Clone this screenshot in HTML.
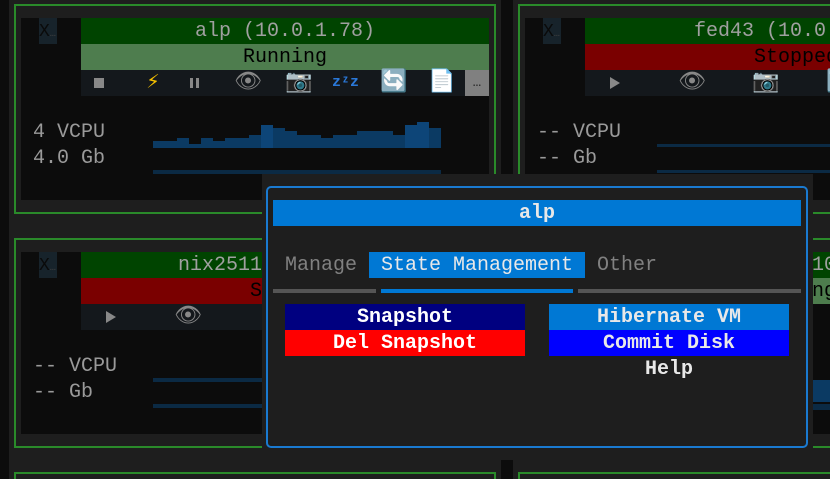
<!DOCTYPE html>
<html><head><meta charset="utf-8"><style>
*{margin:0;padding:0;box-sizing:border-box}
html,body{width:830px;height:479px;overflow:hidden}
body{background:#1e1e1e;position:relative;font-family:"Liberation Mono","DejaVu Sans Mono",monospace;font-size:20px;line-height:30px}
.a{position:absolute}
.card{position:absolute;border:2px solid #2a8a2a}
.inner{position:absolute;background:#0c0c0c}
.c{text-align:center;white-space:nowrap;overflow:hidden}
.x{position:absolute;background:#17232b;color:#0a0a0a;font-size:18px;width:18px;height:26px;line-height:28px}
.x span{color:#444;font-size:10px}
.bar{position:absolute;background:#0b3a63}
.ico{position:absolute;top:0;height:26px;line-height:26px;font-size:22px;text-align:center}
</style></head><body>
<div class="a" style="left:0;top:0;width:9px;height:479px;background:#0c0c0c"></div>
<div class="a" style="left:501px;top:0;width:12px;height:479px;background:#0c0c0c"></div>

<!-- card 1 -->
<div class="card" style="left:14px;top:4px;width:482px;height:210px"></div>
<div class="inner" style="left:21px;top:18px;width:468px;height:182px"></div>
<div class="x" style="left:39px;top:18px">X<span>…</span></div>
<div class="a c" style="left:81px;top:18px;width:408px;height:26px;background:#004400;color:#a0a0a0;line-height:28px">alp (10.0.1.78)</div>
<div class="a c" style="left:81px;top:44px;width:408px;height:26px;background:#4e7d4e;color:#000;line-height:28px">Running</div>
<div class="a" style="left:81px;top:70px;width:408px;height:26px;background:#14181c">
<div class="a" style="left:13px;top:8px;width:10px;height:10px;background:#888"></div>
<div class="ico" style="left:60px;width:24px;color:#f5c000">⚡</div>
<div class="a" style="left:109px;top:8px;width:3px;height:10px;background:#888"></div>
<div class="a" style="left:115px;top:8px;width:3px;height:10px;background:#888"></div>
<div class="ico" style="left:153px;width:26px;color:#888">👁</div>
<div class="ico" style="left:204px;width:26px">📷</div>
<div class="ico" style="left:251px;width:26px;color:#2a78d8;font-weight:bold;font-size:15px">zᶻz</div>
<div class="ico" style="left:299px;width:26px">🔄</div>
<div class="ico" style="left:347px;width:26px">📄</div>
<div class="a c" style="left:384px;top:0;width:24px;height:26px;background:#808080;color:#222;font-size:14px;line-height:26px">…</div>
</div>
<div class="a" style="left:33px;top:120px;color:#9a9a9a;line-height:26px">4 VCPU<br>4.0 Gb</div>
<div class="a" style="left:153px;top:170px;width:288px;height:4px;background:#0b2a44"></div>

<!-- card 2 -->
<div class="card" style="left:518px;top:4px;width:330px;height:210px"></div>
<div class="inner" style="left:525px;top:18px;width:320px;height:182px"></div>
<div class="x" style="left:543px;top:18px">X<span>…</span></div>
<div class="a" style="left:585px;top:18px;width:260px;height:26px;background:#004400;color:#a0a0a0;padding-left:109px;white-space:nowrap;line-height:28px">fed43 (10.0.</div>
<div class="a" style="left:585px;top:44px;width:260px;height:26px;background:#7a0000;color:#000;padding-left:169px;white-space:nowrap;line-height:28px">Stopped</div>
<div class="a" style="left:585px;top:70px;width:260px;height:26px;background:#14181c">
<div class="a" style="left:25px;top:7px;width:0;height:0;border-left:10px solid #888;border-top:6px solid transparent;border-bottom:6px solid transparent"></div>
<div class="ico" style="left:93px;width:26px;color:#888">👁</div>
<div class="ico" style="left:167px;width:26px">📷</div>
<div class="ico" style="left:241px;width:26px">🔄</div>
</div>
<div class="a" style="left:537px;top:120px;color:#9a9a9a;line-height:26px">-- VCPU<br>-- Gb</div>
<div class="a" style="left:657px;top:144px;width:180px;height:3px;background:#0b2a44"></div>
<div class="a" style="left:657px;top:170px;width:180px;height:3px;background:#0b2a44"></div>

<!-- card 3 -->
<div class="card" style="left:14px;top:238px;width:482px;height:210px"></div>
<div class="inner" style="left:21px;top:252px;width:468px;height:182px"></div>
<div class="x" style="left:39px;top:252px">X<span>…</span></div>
<div class="a" style="left:81px;top:252px;width:408px;height:26px;background:#004400;color:#a0a0a0;padding-left:97px;line-height:28px">nix2511</div>
<div class="a" style="left:81px;top:278px;width:408px;height:26px;background:#7a0000;color:#000;padding-left:169px;line-height:28px">S</div>
<div class="a" style="left:81px;top:304px;width:408px;height:26px;background:#14181c">
<div class="a" style="left:25px;top:7px;width:0;height:0;border-left:10px solid #888;border-top:6px solid transparent;border-bottom:6px solid transparent"></div>
<div class="ico" style="left:93px;width:26px;color:#888">👁</div>
</div>
<div class="a" style="left:33px;top:354px;color:#9a9a9a;line-height:26px">-- VCPU<br>-- Gb</div>
<div class="a" style="left:153px;top:378px;width:300px;height:4px;background:#0b2a44"></div>
<div class="a" style="left:153px;top:404px;width:300px;height:4px;background:#0b2a44"></div>

<!-- card 4 -->
<div class="card" style="left:518px;top:238px;width:330px;height:210px"></div>
<div class="inner" style="left:525px;top:252px;width:320px;height:182px"></div>
<div class="a" style="left:812px;top:252px;width:30px;height:26px;background:#004400;color:#a0a0a0;line-height:28px">10</div>
<div class="a" style="left:812px;top:278px;width:30px;height:26px;background:#4e7d4e;color:#000;line-height:28px">ng</div>
<div class="a" style="left:812px;top:380px;width:30px;height:22px;background:#0b3a63"></div>
<div class="a" style="left:812px;top:404px;width:30px;height:6px;background:#0b2a44"></div>

<!-- bottom row -->
<div class="card" style="left:14px;top:472px;width:482px;height:7px;border-bottom:none"></div>
<div class="card" style="left:518px;top:472px;width:330px;height:7px;border-bottom:none"></div>

<!-- modal -->
<div class="a" style="left:262px;top:174px;width:551px;height:286px;background:#1e1e1e"></div>
<div class="a" style="left:266px;top:186px;width:542px;height:262px;border:2px solid #1a7ad0;border-radius:5px"></div>
<div class="a c" style="left:273px;top:200px;width:528px;height:26px;background:#0078d4;color:#e8e8e8;font-weight:bold;line-height:28px">alp</div>
<div class="a" style="left:285px;top:252px;color:#808080;line-height:28px">Manage</div>
<div class="a c" style="left:369px;top:252px;width:216px;height:26px;background:#0078d4;color:#e8e8e8;line-height:28px">State Management</div>
<div class="a" style="left:597px;top:252px;color:#808080;line-height:28px">Other</div>
<div class="a" style="left:273px;top:289px;width:103px;height:4px;background:#555"></div>
<div class="a" style="left:381px;top:289px;width:192px;height:4px;background:#0078d4"></div>
<div class="a" style="left:578px;top:289px;width:223px;height:4px;background:#555"></div>
<div class="a c" style="left:285px;top:304px;width:240px;height:26px;background:#000080;color:#fff;font-weight:bold;line-height:28px">Snapshot</div>
<div class="a c" style="left:285px;top:330px;width:240px;height:26px;background:#ff0000;color:#fff;font-weight:bold;line-height:28px">Del Snapshot</div>
<div class="a c" style="left:549px;top:304px;width:240px;height:26px;background:#0078d4;color:#e8e8e8;font-weight:bold;line-height:28px">Hibernate VM</div>
<div class="a c" style="left:549px;top:330px;width:240px;height:26px;background:#0000ff;color:#e8e8e8;font-weight:bold;line-height:28px">Commit Disk</div>
<div class="a c" style="left:549px;top:356px;width:240px;height:26px;color:#e8e8e8;font-weight:bold;line-height:28px">Help</div>

<div class="a" style="left:153px;top:122px">
<div class="bar" style="left:0;top:19px;width:12px;height:7px"></div>
<div class="bar" style="left:12px;top:19px;width:12px;height:7px"></div>
<div class="bar" style="left:24px;top:16px;width:12px;height:10px"></div>
<div class="bar" style="left:36px;top:22px;width:12px;height:4px"></div>
<div class="bar" style="left:48px;top:16px;width:12px;height:10px"></div>
<div class="bar" style="left:60px;top:19px;width:12px;height:7px"></div>
<div class="bar" style="left:72px;top:16px;width:12px;height:10px"></div>
<div class="bar" style="left:84px;top:16px;width:12px;height:10px"></div>
<div class="bar" style="left:96px;top:13px;width:12px;height:13px"></div>
<div class="bar" style="left:108px;top:3px;width:12px;height:23px;background:#0d4578"></div>
<div class="bar" style="left:120px;top:6px;width:12px;height:20px"></div>
<div class="bar" style="left:132px;top:9px;width:12px;height:17px"></div>
<div class="bar" style="left:144px;top:13px;width:12px;height:13px"></div>
<div class="bar" style="left:156px;top:13px;width:12px;height:13px"></div>
<div class="bar" style="left:168px;top:16px;width:12px;height:10px"></div>
<div class="bar" style="left:180px;top:13px;width:12px;height:13px"></div>
<div class="bar" style="left:192px;top:13px;width:12px;height:13px"></div>
<div class="bar" style="left:204px;top:9px;width:12px;height:17px"></div>
<div class="bar" style="left:216px;top:9px;width:12px;height:17px"></div>
<div class="bar" style="left:228px;top:9px;width:12px;height:17px"></div>
<div class="bar" style="left:240px;top:13px;width:12px;height:13px"></div>
<div class="bar" style="left:252px;top:3px;width:12px;height:23px;background:#0d4578"></div>
<div class="bar" style="left:264px;top:0;width:12px;height:26px;background:#0d4578"></div>
<div class="bar" style="left:276px;top:6px;width:12px;height:20px"></div>
</div>
</body></html>
